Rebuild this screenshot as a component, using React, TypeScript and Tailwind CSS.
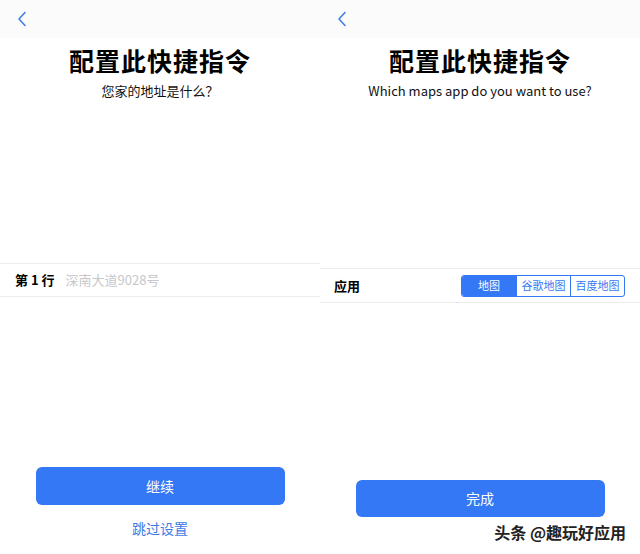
const FONT = "font-['Noto_Sans_CJK_SC','Noto_Sans',sans-serif]";

function BackChevron() {
  return (
    <svg width="10" height="16" viewBox="0 0 10 16" fill="none">
      <path d="M8 1.5L2 8l6 6.5" stroke="#3a7be8" strokeWidth="1.5" strokeLinecap="round" strokeLinejoin="round" />
    </svg>
  );
}

function NavBar() {
  return (
    <div className="h-[38px] bg-[#fbfbfb] flex items-center pl-[17px]">
      <BackChevron />
    </div>
  );
}

function Header({ subtitle }: { subtitle: string }) {
  return (
    <>
      <h1 className="mt-[6px] text-center text-[25px] leading-[32px] font-bold text-black tracking-[1px]">
        配置此快捷指令
      </h1>
      <p className="mt-[5px] text-center text-[13px] leading-[20px] text-[#111]">{subtitle}</p>
    </>
  );
}

function AddressPanel() {
  return (
    <div className="w-1/2 flex flex-col bg-white">
      <NavBar />
      <Header subtitle="您家的地址是什么？" />
      <div className="mt-[162px] h-[34px] border-y border-[#ececec] flex items-center pl-[15px]">
        <span className="text-[13px] font-bold text-black">第 1 行</span>
        <span className="ml-[11px] text-[13px] text-[#c7c7cc]">深南大道9028号</span>
      </div>
      <button className="mt-[170px] mx-auto w-[249px] h-[38px] rounded-[6px] bg-[#3478f6] text-white text-[14px]">
        继续
      </button>
      <p className="mt-[13px] text-center text-[14px] leading-[20px] text-[#3d7be3]">跳过设置</p>
    </div>
  );
}

const apps = ["地图", "谷歌地图", "百度地图"];

function MapsPanel() {
  return (
    <div className="w-1/2 flex flex-col bg-white">
      <NavBar />
      <Header subtitle="Which maps app do you want to use?" />
      <div className="mt-[167px] h-[35px] border-y border-[#ececec] flex items-center justify-between pl-[14px] pr-[15px]">
        <span className="text-[13px] font-bold text-black">应用</span>
        <div className="flex h-[22px] rounded-[3px] border border-[#3478f6] overflow-hidden text-[11px]">
          {apps.map((a, i) => (
            <div
              key={a}
              className={
                i === 0
                  ? "w-[54px] flex items-center justify-center bg-[#3478f6] text-white"
                  : "w-[54px] flex items-center justify-center text-[#3478f6] border-l border-[#3478f6]"
              }
            >
              {a}
            </div>
          ))}
        </div>
      </div>
      <button className="mt-[177px] mx-auto w-[249px] h-[37px] rounded-[6px] bg-[#3478f6] text-white text-[14px]">
        完成
      </button>
      <p className="mt-[4px] self-end pr-[14px] text-[16px] leading-[22px] font-bold text-[#222] [text-shadow:0_0_2px_#fff,0_0_2px_#fff]">
        头条 @趣玩好应用
      </p>
    </div>
  );
}

export default function App() {
  return (
    <div className={`${FONT} w-[640px] h-[554px] flex bg-white overflow-hidden`}>
      <AddressPanel />
      <MapsPanel />
    </div>
  );
}
